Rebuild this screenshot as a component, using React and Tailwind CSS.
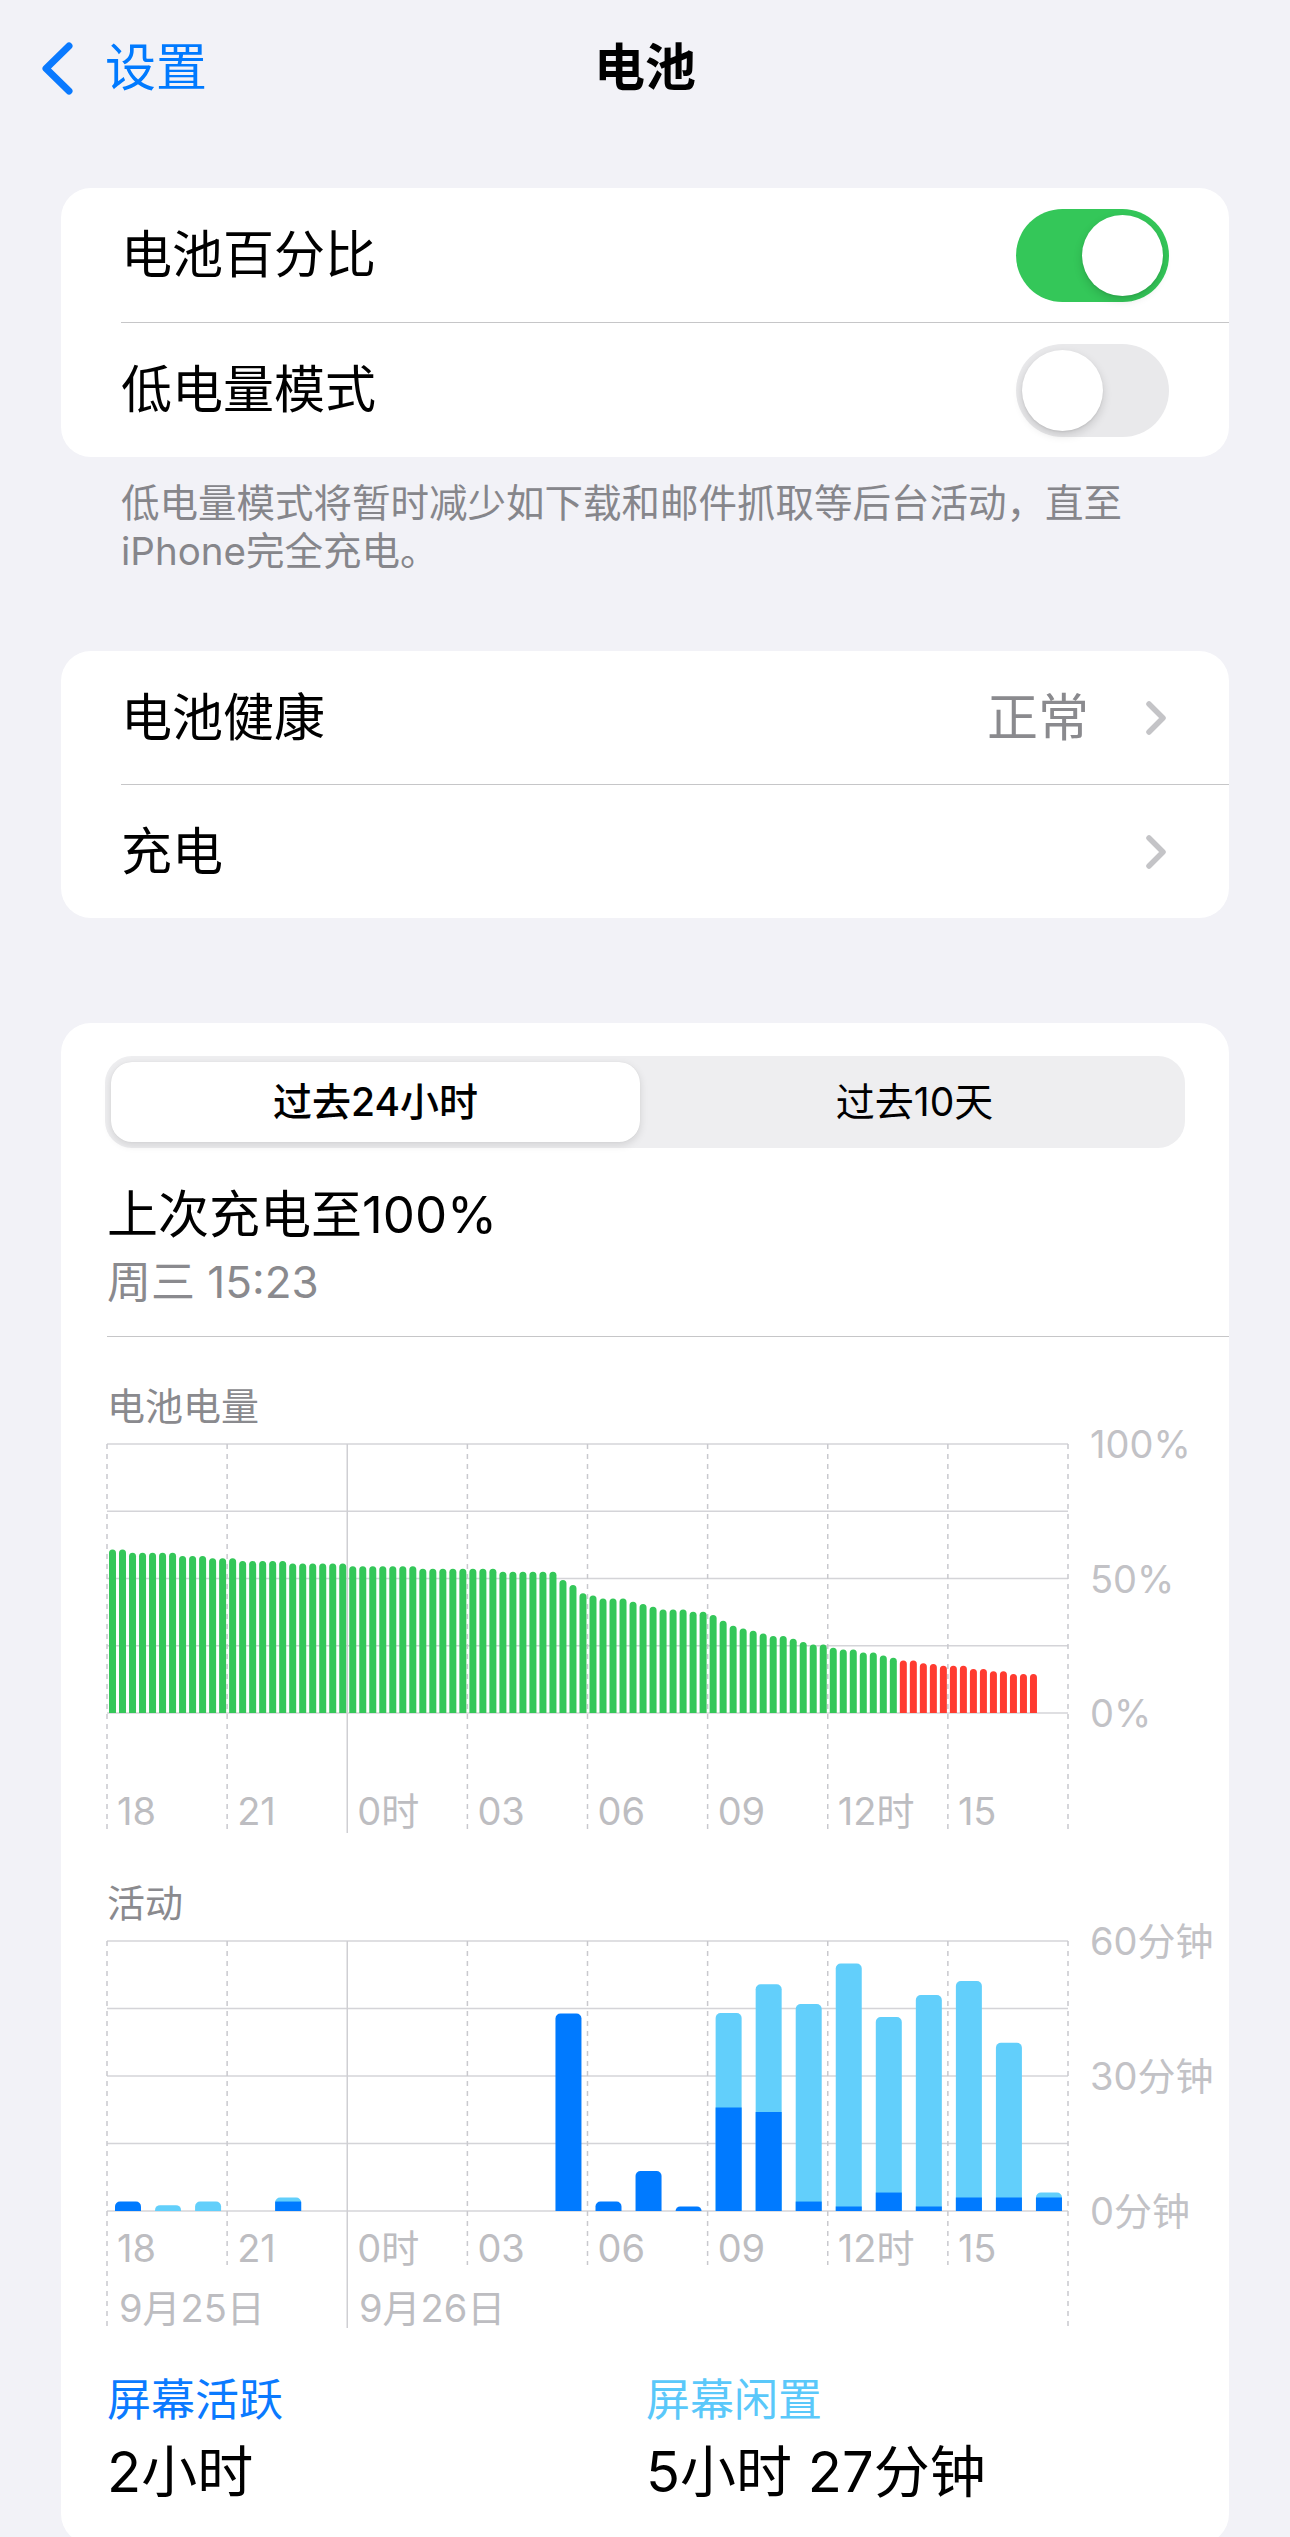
import React from 'react';

// battery level every 15 min, from 18:00 yesterday
const battery = [
  60.8, 60.8,
  59.6, 59.6, 59.6, 59.6, 59.6,
  58.4, 58.4, 58.4,
  57.5, 57.5, 57.5,
  56.5, 56.5, 56.5, 56.5, 56.5,
  55.6, 55.6, 55.6, 55.6, 55.6, 55.6,
  54.6, 54.6, 54.6, 54.6, 54.6, 54.6, 54.6,
  53.6, 53.6, 53.6, 53.6, 53.6, 53.6, 53.6, 53.6,
  52.5, 52.5, 52.5, 52.5, 52.5, 52.5,
  49.4, 47.6, 44.5, 43.7, 42.6, 42.6, 42.6, 41.4, 40.5, 39.5,
  38.5, 38.5, 38.5, 37.6, 37.6, 36.4, 34.3, 32.4, 31.4, 30.6, 29.6,
  28.6, 28.6, 27.6, 26.4, 25.5, 25.5, 24.3, 23.6, 23.6, 22.5, 22.5, 21.4, 20.5,
  19.5, 19.5, 18.5, 18.2, 17.6, 17.6, 17.6, 16.4, 16.4, 15.5, 15.5, 14.5, 14.5, 14.5,
];

// minutes per hour slot: [screen on, screen idle]
const activity = [
  [2.1, 0], [0, 1.3], [0, 2.1], [0, 0], [2.1, 0.9], [0, 0], [0, 0], [0, 0],
  [0, 0], [0, 0], [0, 0], [43.9, 0], [2.1, 0], [8.9, 0], [1, 0], [23, 21],
  [22, 28.4], [2.1, 43.9], [1, 54], [4.1, 39], [1, 47], [3, 48.1], [3, 34.4], [3, 1.1],
];

const hours = ['18', '21', '0时', '03', '06', '09', '12时', '15'];
const W = 961;
const COL = W / 8;

const roundTop = (x, y, w, h, r) => {
  const rr = Math.min(r, h, w / 2);
  return `M${x},${y + h} V${y + rr} A${rr},${rr} 0 0 1 ${x + rr},${y} H${x + w - rr} A${rr},${rr} 0 0 1 ${x + w},${y + rr} V${y + h} Z`;
};

const Toggle = ({ on }) => (
  <div className={`w-[153px] h-[93px] rounded-full p-[6px] flex ${on ? 'bg-[#34c759] justify-end' : 'bg-[#e9e9eb] justify-start'}`}>
    <div className="w-[81px] h-[81px] rounded-full bg-white shadow-[0_4px_10px_rgba(0,0,0,0.15),0_1px_2px_rgba(0,0,0,0.08)]" />
  </div>
);

const Chevron = () => (
  <svg width="22" height="36" viewBox="0 0 22 36" className="shrink-0">
    <path d="M4 4 L18 18 L4 32" fill="none" stroke="#c4c4c7" strokeWidth="5.5" strokeLinecap="round" strokeLinejoin="round" />
  </svg>
);

const Grid = ({ top, base, long }) => (
  <g>
    {[0, 1, 2, 3, 4].map((k) => {
      const y = top + ((base - top) * k) / 4;
      return <line key={k} x1="0" x2={W} y1={y} y2={y} stroke="#d4d4d8" strokeWidth="1.5" />;
    })}
    {Array.from({ length: 9 }).map((_, k) => (
      <line
        key={k}
        x1={k * COL}
        x2={k * COL}
        y1={top}
        y2={long(k)}
        stroke={k === 2 ? '#cfcfd3' : '#c9c9ce'}
        strokeWidth="1.5"
        strokeDasharray={k === 2 ? undefined : '5 5'}
      />
    ))}
  </g>
);

const BatteryChart = () => {
  const top = 14;
  const base = 283;
  const slot = W / 96;
  return (
    <svg width="1123" height="410" className="block overflow-visible">
      <Grid top={top} base={base} long={() => 403} />
      {battery.map((v, i) => {
        const h = ((base - top) * v) / 100;
        return (
          <path
            key={i}
            d={roundTop(i * slot + 2, base - h, 7, h, 3.5)}
            fill={v < 20 ? '#ff3b30' : '#34c759'}
          />
        );
      })}
      {hours.map((t, k) => (
        <text key={t} x={k * COL + 10} y="395" fontSize="38" fill="#bdbdc1">{t}</text>
      ))}
      {[['100%', top], ['50%', (top + base) / 2], ['0%', base]].map(([t, y]) => (
        <text key={t} x="983" y={y} dominantBaseline="central" fontSize="38" fill="#c2c2c6">{t}</text>
      ))}
    </svg>
  );
};

const ActivityChart = () => {
  const top = 15;
  const base = 285;
  const slot = W / 24;
  const px = (m) => ((base - top) * m) / 60;
  return (
    <svg width="1123" height="410" className="block overflow-visible">
      <Grid top={top} base={base} long={(k) => (k === 0 || k === 2 || k === 8 ? 402 : 339)} />
      {activity.map(([on, idle], i) => {
        const x = i * slot + 8;
        const total = px(on + idle);
        if (total === 0) return null;
        const dark = px(on);
        return (
          <g key={i}>
            {idle > 0 && <path d={roundTop(x, base - total, 26, total, 5)} fill="#62cffb" />}
            {on > 0 && (idle > 0
              ? <rect x={x} y={base - dark} width="26" height={dark} fill="#007aff" />
              : <path d={roundTop(x, base - dark, 26, dark, 5)} fill="#007aff" />)}
          </g>
        );
      })}
      {hours.map((t, k) => (
        <text key={t} x={k * COL + 10} y="336" fontSize="38" fill="#bdbdc1">{t}</text>
      ))}
      <text x="12" y="396" fontSize="38" fill="#bdbdc1">9月25日</text>
      <text x="252" y="396" fontSize="38" fill="#bdbdc1">9月26日</text>
      {[['60分钟', top], ['30分钟', (top + base) / 2], ['0分钟', base]].map(([t, y]) => (
        <text key={t} x="983" y={y} dominantBaseline="central" fontSize="38" fill="#c2c2c6">{t}</text>
      ))}
    </svg>
  );
};

export default function App() {
  return (
    <div className="w-[1290px] h-[2537px] overflow-hidden bg-[#f2f2f7] text-black font-['Inter','Noto_Sans_CJK_SC',sans-serif]">
      {/* nav bar */}
      <header className="grid grid-cols-[1fr_auto_1fr] items-center h-[136px]">
        <div className="flex items-center pl-[40px] gap-[31px] text-[#007aff]">
          <svg width="34" height="55" viewBox="0 0 34 55">
            <path d="M29 5 L6 27.5 L29 50" fill="none" stroke="#0a7aff" strokeWidth="7" strokeLinecap="round" strokeLinejoin="round" />
          </svg>
          <span className="text-[51px] leading-[60px]">设置</span>
        </div>
        <h1 className="text-[51px] leading-[60px] font-semibold">电池</h1>
        <div />
      </header>

      <main className="px-[61px] pt-[52px]">
        <section className="bg-white rounded-[30px]">
          <div className="h-[134px] flex items-center justify-between px-[60px]">
            <span className="text-[51px] leading-[60px]">电池百分比</span>
            <Toggle on />
          </div>
          <div className="ml-[60px] h-px bg-[#c6c6c8]" />
          <div className="h-[134px] flex items-center justify-between px-[60px]">
            <span className="text-[51px] leading-[60px]">低电量模式</span>
            <Toggle />
          </div>
        </section>
        <p className="mt-[22px] px-[60px] text-[38.5px] leading-[48px] text-[#86868b]">
          低电量模式将暂时减少如下载和邮件抓取等后台活动，直至<br />iPhone完全充电。
        </p>

        <section className="mt-[76px] bg-white rounded-[30px]">
          <div className="h-[133px] flex items-center pl-[60px] pr-[62px]">
            <span className="flex-1 text-[51px] leading-[60px]">电池健康</span>
            <span className="text-[51px] leading-[60px] text-[#8a8a8e] mr-[56px]">正常</span>
            <Chevron />
          </div>
          <div className="ml-[60px] h-px bg-[#c6c6c8]" />
          <div className="h-[133px] flex items-center pl-[60px] pr-[62px]">
            <span className="flex-1 text-[51px] leading-[60px]">充电</span>
            <Chevron />
          </div>
        </section>

        <section className="mt-[105px] bg-white rounded-[30px] pt-[33px] pb-[40px]">
          <div className="mx-[44px] h-[92px] rounded-[27px] bg-[#eeeef0] p-[6px] flex text-[39px] leading-[46px]">
            <div className="flex-1 flex pr-[10px]">
              <div className="flex-1 rounded-[21px] bg-white flex items-center justify-center font-medium shadow-[0_3px_8px_rgba(0,0,0,0.12),0_0_1px_rgba(0,0,0,0.1)]">
                过去24小时
              </div>
            </div>
            <div className="flex-1 flex items-center justify-center">过去10天</div>
          </div>

          <div className="pl-[46px] mt-[37px] text-[51px] leading-[60px]">上次充电至100%</div>
          <div className="pl-[46px] mt-[10px] text-[44px] leading-[54px] text-[#8a8a8e]">周三 15:23</div>
          <div className="ml-[46px] mt-[27px] h-px bg-[#c6c6c8]" />

          <div className="pl-[46px]">
            <div className="mt-[46px] text-[38px] leading-[46px] text-[#8a8a8e]">电池电量</div>
            <div className="mt-px">
              <BatteryChart />
            </div>
            <div className="mt-[40px] text-[38px] leading-[46px] text-[#8a8a8e]">活动</div>
            <ActivityChart />
            <div className="mt-[37px] grid grid-cols-2 w-[1078px]">
              <div>
                <div className="text-[44px] leading-[54px] text-[#0a7aff]">屏幕活跃</div>
                <div className="mt-[13px] text-[56px] leading-[64px]">2小时</div>
              </div>
              <div>
                <div className="text-[44px] leading-[54px] text-[#5ac8fa]">屏幕闲置</div>
                <div className="mt-[13px] text-[56px] leading-[64px]">5小时 27分钟</div>
              </div>
            </div>
          </div>
        </section>
      </main>
    </div>
  );
}
